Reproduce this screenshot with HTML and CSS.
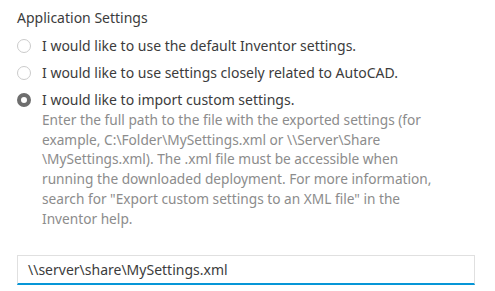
FILE: index.html
```html
<!DOCTYPE html>
<html lang="en">
<head>
  <meta charset="UTF-8" />
  <title>Application Settings</title>
  <link rel="stylesheet" href="styles.css">
</head>
<body>
  <div class="settings">
    <div class="section-title">Application Settings</div>

    <label class="radio-row">
      <span class="radio"></span>
      <span class="radio-label">I would like to use the default Inventor settings.</span>
    </label>

    <label class="radio-row">
      <span class="radio"></span>
      <span class="radio-label">I would like to use settings closely related to AutoCAD.</span>
    </label>

    <label class="radio-row">
      <span class="radio checked"></span>
      <span class="radio-body">
        <span class="radio-label">I would like to import custom settings.</span>
        <span class="radio-help">Enter the full path to the file with the exported settings (for<br>example, C:\Folder\MySettings.xml or \\Server\Share<br>\MySettings.xml). The .xml file must be accessible when<br>running the downloaded deployment. For more information,<br>search for "Export custom settings to an XML file" in the<br>Inventor help.</span>
      </span>
    </label>

    <div class="path-field">\\server\share\MySettings.xml</div>
  </div>
</body>
</html>
```

FILE: styles.css
```css
* {
  box-sizing: border-box;
}
html, body {
  margin: 0;
  padding: 0;
  background: #fff;
  font-family: 'Noto Sans', 'Open Sans', sans-serif;
  color: #3c3c3c;
}

.settings {
  display: flex;
  flex-direction: column;
  padding: 8px 20px 0 17px;
}

.section-title {
  font-size: 14px;
  line-height: 20px;
  margin-bottom: 8px;
}

.radio-row {
  display: flex;
  align-items: flex-start;
  gap: 11px;
  margin-bottom: 7px;
}

.radio {
  flex: none;
  width: 14px;
  height: 14px;
  margin-top: 3px;
  border: 1px solid #cbcbcb;
  border-radius: 50%;
  background: #fff;
}

.radio.checked {
  border: 4px solid #6e6e6e;
  background: #fff;
}

.radio-body {
  display: flex;
  flex-direction: column;
}

.radio-label {
  font-size: 14px;
  line-height: 20px;
  color: #3c3c3c;
}

.radio-help {
  font-size: 13.7px;
  line-height: 19.7px;
  color: #8c8c8c;
}

.path-field {
  margin-top: 20px;
  height: 30px;
  padding: 3px 10px 0;
  font-size: 14px;
  line-height: 22px;
  color: #3c3c3c;
  border: 1px solid #e0e0e0;
  border-bottom: 2px solid #0696d7;
}
```
